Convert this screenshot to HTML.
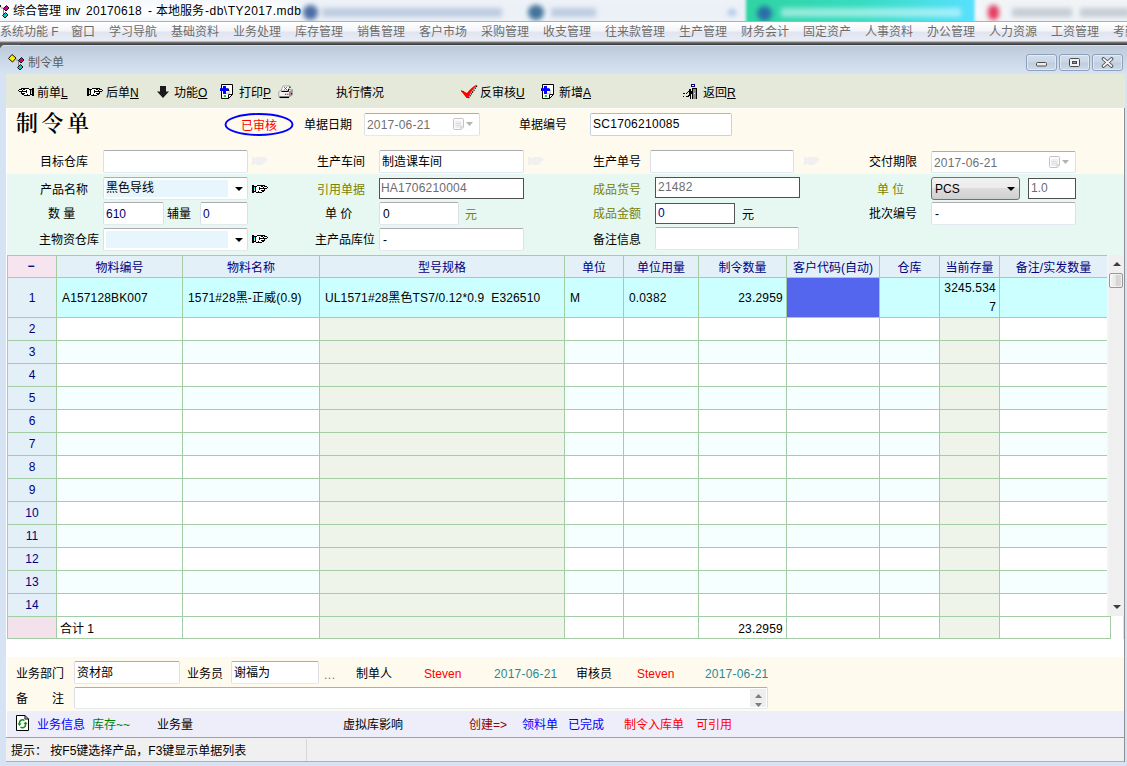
<!DOCTYPE html><html lang="zh-CN"><head><meta charset="utf-8"><title>制令单</title><style>
html,body{margin:0;padding:0;}
body{width:1127px;height:766px;overflow:hidden;position:relative;background:#fff;
 font-family:"Liberation Sans","Noto Sans CJK SC",sans-serif;font-size:12px;color:#000;}
.a{position:absolute;white-space:nowrap;}
.t{position:absolute;white-space:nowrap;line-height:14px;height:14px;}
.in{position:absolute;box-sizing:border-box;background:#fff;border:1px solid #dbdfe6;border-top-color:#abadb3;border-bottom-color:#e3e9ef;border-radius:2px;white-space:nowrap;overflow:hidden;line-height:14px;padding:4px 0 0 2px;}
.in.dk{border:1px solid #505050;border-radius:0;color:#6d6d6d;background:#fff;}
.ol{color:#808000;}
u{text-decoration:underline;}
.c{position:absolute;box-sizing:border-box;border-right:1px solid #a5cda5;border-bottom:1px solid #a5cda5;white-space:nowrap;overflow:hidden;}
.h{color:#000080;text-align:center;line-height:20px;}
</style></head><body>
<div class="a" id="titlebar" style="left:0;top:0;width:1127px;height:21px;background:linear-gradient(#f4f8fc,#ffffff 60%,#f2f5f9);overflow:hidden;">
<div class="a" style="left:296px;top:-4px;width:460px;height:30px;background:#ecf1f7;filter:blur(4px);opacity:1;border-radius:0px;"></div>
<div class="a" style="left:303px;top:5px;width:15px;height:15px;background:#3b5f9c;filter:blur(2.5px);opacity:0.9;border-radius:8px;"></div>
<div class="a" style="left:322px;top:8px;width:180px;height:9px;background:#9fb4d2;filter:blur(2.5px);opacity:0.6;border-radius:0px;"></div>
<div class="a" style="left:528px;top:5px;width:16px;height:15px;background:#2f6590;filter:blur(2.5px);opacity:0.9;border-radius:8px;"></div>
<div class="a" style="left:551px;top:8px;width:45px;height:9px;background:#9fb4d2;filter:blur(2.5px);opacity:0.6;border-radius:0px;"></div>
<div class="a" style="left:728px;top:9px;width:8px;height:7px;background:#a8c4e8;filter:blur(2px);opacity:0.8;border-radius:0px;"></div>
<div class="a" style="left:746px;top:-6px;width:229px;height:32px;background:linear-gradient(90deg,#2fd3a2,#36dcc0 50%,#58e0ff);filter:blur(1.500px);"></div>
<div class="a" style="left:757px;top:6px;width:15px;height:15px;background:#2a62a8;filter:blur(2.5px);opacity:0.9;border-radius:8px;"></div>
<div class="a" style="left:781px;top:8px;width:180px;height:9px;background:#e8fbff;filter:blur(2.5px);opacity:0.55;border-radius:0px;"></div>
<div class="a" style="left:978px;top:-4px;width:160px;height:30px;background:#f1f4f7;filter:blur(3px);opacity:1;border-radius:0px;"></div>
<div class="a" style="left:988px;top:5px;width:11px;height:15px;background:#e23358;filter:blur(2.5px);opacity:0.95;border-radius:6px;"></div>
<div class="a" style="left:1012px;top:8px;width:60px;height:9px;background:#9aa6b4;filter:blur(2.5px);opacity:0.5;border-radius:0px;"></div>
<div class="a" style="left:1080px;top:8px;width:50px;height:9px;background:#9aa6b4;filter:blur(2.5px);opacity:0.5;border-radius:0px;"></div>
</div>
<svg class="a" style="left:-7px;top:2px;" width="17" height="17" viewBox="0 0 17 17"><path d="M8 6h2.500v6.500h2" fill="none" stroke="#888" stroke-width="1"/><path d="M4 0.500l4 3.500l-3.500 4l-4 -3.500z" fill="#ffee00" stroke="#111" stroke-width="1"/><path d="M13.500 3.500l2.500 2.500l-3 3l-2.500 -2.500z" fill="#d4007f" stroke="#111" stroke-width="1"/><path d="M12.500 10.500l2.500 2.500l-3 3l-2.500 -2.500z" fill="#00c8c8" stroke="#111" stroke-width="1"/></svg>
<div class="a" id="apptitle" style="left:0;top:3px;width:320px;height:16px;font-size:12px;line-height:16px;"><span class="a" style="left:13px;">综合管理</span><span class="a" style="left:66px;letter-spacing:-0.5px;">inv</span><span class="a" style="left:86px;letter-spacing:0.33px;">20170618</span><span class="a" style="left:148px;">-</span><span class="a" style="left:156px;">本地服务</span><span class="a" style="left:205px;letter-spacing:0.5px;">-db\TY2017.mdb</span></div>
<div class="a" id="menubar" style="left:0;top:21px;width:1127px;height:20px;background:linear-gradient(#ffffff,#f4f5f9 45%,#e1e5f0 55%,#e9ecf5);border-top:1px solid #aab0bc;box-sizing:border-box;color:#6d6d6d;overflow:hidden;">
<span class="t" style="left:0px;top:3px;">系统功能 F</span>
<span class="t" style="left:71px;top:3px;">窗口</span>
<span class="t" style="left:109px;top:3px;">学习导航</span>
<span class="t" style="left:171px;top:3px;">基础资料</span>
<span class="t" style="left:233px;top:3px;">业务处理</span>
<span class="t" style="left:295px;top:3px;">库存管理</span>
<span class="t" style="left:357px;top:3px;">销售管理</span>
<span class="t" style="left:419px;top:3px;">客户市场</span>
<span class="t" style="left:481px;top:3px;">采购管理</span>
<span class="t" style="left:543px;top:3px;">收支管理</span>
<span class="t" style="left:605px;top:3px;">往来款管理</span>
<span class="t" style="left:679px;top:3px;">生产管理</span>
<span class="t" style="left:741px;top:3px;">财务会计</span>
<span class="t" style="left:803px;top:3px;">固定资产</span>
<span class="t" style="left:865px;top:3px;">人事资料</span>
<span class="t" style="left:927px;top:3px;">办公管理</span>
<span class="t" style="left:989px;top:3px;">人力资源</span>
<span class="t" style="left:1051px;top:3px;">工资管理</span>
<span class="t" style="left:1113px;top:3px;">考勤</span>
</div>
<div class="a" style="left:0;top:41px;width:1127px;height:4px;background:linear-gradient(#d8d8d8,#6e6e6e 40%,#303030);"></div>
<div class="a" style="left:0;top:44px;width:20px;height:8px;background:#555;"></div>
<div class="a" id="child" style="left:0;top:45px;width:1127px;height:721px;background:#d6e3f4;border-radius:5px 0 0 0;"></div>
<div class="a" style="left:0;top:45px;width:1127px;height:29px;background:linear-gradient(#e4ecf4 0,#bccadb 1.500px,#cad7e6 50%,#d6e3f3);border-radius:5px 0 0 0;"></div>
<div class="t" style="left:28px;top:56px;color:#5e5e5e;">制令单</div>
<svg class="a" style="left:8px;top:54px;" width="17" height="17" viewBox="0 0 17 17"><path d="M8 6h2.500v6.500h2" fill="none" stroke="#888" stroke-width="1"/><path d="M4 0.500l4 3.500l-3.500 4l-4 -3.500z" fill="#ffee00" stroke="#111" stroke-width="1"/><path d="M13.500 3.500l2.500 2.500l-3 3l-2.500 -2.500z" fill="#d4007f" stroke="#111" stroke-width="1"/><path d="M12.500 10.500l2.500 2.500l-3 3l-2.500 -2.500z" fill="#00c8c8" stroke="#111" stroke-width="1"/></svg>
<div class="a" style="left:1026px;top:54px;width:31px;height:17px;box-sizing:border-box;border:1px solid #8fa0ba;border-radius:3px;background:linear-gradient(#d3deec,#c9d6e6 48%,#bfcde0 52%,#cbd9ea);box-shadow:inset 0 0 0 1px rgba(255,255,255,.45);"></div>
<div class="a" style="left:1059px;top:54px;width:31px;height:17px;box-sizing:border-box;border:1px solid #8fa0ba;border-radius:3px;background:linear-gradient(#d3deec,#c9d6e6 48%,#bfcde0 52%,#cbd9ea);box-shadow:inset 0 0 0 1px rgba(255,255,255,.45);"></div>
<div class="a" style="left:1092px;top:54px;width:31px;height:17px;box-sizing:border-box;border:1px solid #8fa0ba;border-radius:3px;background:linear-gradient(#d3deec,#c9d6e6 48%,#bfcde0 52%,#cbd9ea);box-shadow:inset 0 0 0 1px rgba(255,255,255,.45);"></div>
<svg class="a" style="left:1035px;top:57px" width="80" height="11" viewBox="0 0 80 11"><rect x="1.500" y="5.500" width="10" height="3.500" rx="1" fill="#ececec" stroke="#4a4a4a"/><rect x="34.500" y="1.500" width="10" height="8" rx="1" fill="#f2f2f2" stroke="#4a4a4a"/><rect x="37.500" y="4.500" width="4" height="2" fill="#8aa0c0" stroke="#4a4a4a"/><path d="M68.500 2l8 7M76.500 2l-8 7" stroke="#4a4a4a" stroke-width="3.600" stroke-linecap="round"/><path d="M68.500 2l8 7M76.500 2l-8 7" stroke="#f4f4f4" stroke-width="1.800" stroke-linecap="round"/></svg>
<div class="a" id="toolbar" style="left:6px;top:74px;width:1119px;height:34px;background:#e5e9d9;"></div>
<div class="t" style="left:37px;top:86px;">前单<u>L</u></div>
<div class="t" style="left:106px;top:86px;">后单<u>N</u></div>
<div class="t" style="left:174px;top:86px;">功能<u>O</u></div>
<div class="t" style="left:239px;top:86px;">打印<u>P</u></div>
<div class="t" style="left:336px;top:86px;">执行情况</div>
<div class="t" style="left:480px;top:86px;">反审核<u>U</u></div>
<div class="t" style="left:559px;top:86px;">新增<u>A</u></div>
<div class="t" style="left:703px;top:86px;">返回<u>R</u></div>
<svg class="a" style="left:87px;top:88px;" width="16" height="8" viewBox="0 0 16 8" shape-rendering="crispEdges"><rect x="0" y="0" width="2" height="1" fill="#000"/><rect x="5" y="0" width="8" height="1" fill="#000"/><rect x="0" y="1" width="5" height="1" fill="#000"/><rect x="5" y="1" width="4" height="1" fill="#fff"/><rect x="9" y="1" width="2" height="1" fill="#000"/><rect x="11" y="1" width="1" height="1" fill="#fff"/><rect x="12" y="1" width="3" height="1" fill="#000"/><rect x="0" y="2" width="2" height="1" fill="#000"/><rect x="2" y="2" width="1" height="1" fill="#00ffff"/><rect x="3" y="2" width="1" height="1" fill="#000"/><rect x="4" y="2" width="3" height="1" fill="#fff"/><rect x="7" y="2" width="1" height="1" fill="#000"/><rect x="8" y="2" width="3" height="1" fill="#fff"/><rect x="11" y="2" width="1" height="1" fill="#000"/><rect x="12" y="2" width="3" height="1" fill="#fff"/><rect x="15" y="2" width="1" height="1" fill="#000"/><rect x="0" y="3" width="2" height="1" fill="#000"/><rect x="2" y="3" width="1" height="1" fill="#00ffff"/><rect x="3" y="3" width="1" height="1" fill="#000"/><rect x="4" y="3" width="3" height="1" fill="#fff"/><rect x="7" y="3" width="8" height="1" fill="#000"/><rect x="0" y="4" width="2" height="1" fill="#000"/><rect x="2" y="4" width="1" height="1" fill="#f4dada"/><rect x="3" y="4" width="1" height="1" fill="#000"/><rect x="4" y="4" width="3" height="1" fill="#fff"/><rect x="7" y="4" width="1" height="1" fill="#000"/><rect x="8" y="4" width="4" height="1" fill="#fff"/><rect x="12" y="4" width="1" height="1" fill="#000"/><rect x="0" y="5" width="2" height="1" fill="#000"/><rect x="2" y="5" width="1" height="1" fill="#f4dada"/><rect x="3" y="5" width="1" height="1" fill="#000"/><rect x="4" y="5" width="5" height="1" fill="#fff"/><rect x="9" y="5" width="4" height="1" fill="#000"/><rect x="0" y="6" width="4" height="1" fill="#000"/><rect x="4" y="6" width="2" height="1" fill="#fff"/><rect x="6" y="6" width="1" height="1" fill="#000"/><rect x="7" y="6" width="3" height="1" fill="#fff"/><rect x="10" y="6" width="2" height="1" fill="#000"/><rect x="0" y="7" width="2" height="1" fill="#000"/><rect x="4" y="7" width="6" height="1" fill="#000"/></svg>
<svg class="a" style="left:18px;top:88px;" width="16" height="8" viewBox="0 0 16 8" shape-rendering="crispEdges"><rect x="3" y="0" width="8" height="1" fill="#000"/><rect x="14" y="0" width="2" height="1" fill="#000"/><rect x="1" y="1" width="3" height="1" fill="#000"/><rect x="4" y="1" width="1" height="1" fill="#fff"/><rect x="5" y="1" width="2" height="1" fill="#000"/><rect x="7" y="1" width="4" height="1" fill="#fff"/><rect x="11" y="1" width="5" height="1" fill="#000"/><rect x="0" y="2" width="1" height="1" fill="#000"/><rect x="1" y="2" width="3" height="1" fill="#fff"/><rect x="4" y="2" width="1" height="1" fill="#000"/><rect x="5" y="2" width="3" height="1" fill="#fff"/><rect x="8" y="2" width="1" height="1" fill="#000"/><rect x="9" y="2" width="3" height="1" fill="#fff"/><rect x="12" y="2" width="1" height="1" fill="#000"/><rect x="13" y="2" width="1" height="1" fill="#00ffff"/><rect x="14" y="2" width="2" height="1" fill="#000"/><rect x="1" y="3" width="8" height="1" fill="#000"/><rect x="9" y="3" width="3" height="1" fill="#fff"/><rect x="12" y="3" width="1" height="1" fill="#000"/><rect x="13" y="3" width="1" height="1" fill="#00ffff"/><rect x="14" y="3" width="2" height="1" fill="#000"/><rect x="3" y="4" width="1" height="1" fill="#000"/><rect x="4" y="4" width="4" height="1" fill="#fff"/><rect x="8" y="4" width="1" height="1" fill="#000"/><rect x="9" y="4" width="3" height="1" fill="#fff"/><rect x="12" y="4" width="1" height="1" fill="#000"/><rect x="13" y="4" width="1" height="1" fill="#f4dada"/><rect x="14" y="4" width="2" height="1" fill="#000"/><rect x="3" y="5" width="4" height="1" fill="#000"/><rect x="7" y="5" width="5" height="1" fill="#fff"/><rect x="12" y="5" width="1" height="1" fill="#000"/><rect x="13" y="5" width="1" height="1" fill="#f4dada"/><rect x="14" y="5" width="2" height="1" fill="#000"/><rect x="4" y="6" width="2" height="1" fill="#000"/><rect x="6" y="6" width="3" height="1" fill="#fff"/><rect x="9" y="6" width="1" height="1" fill="#000"/><rect x="10" y="6" width="2" height="1" fill="#fff"/><rect x="12" y="6" width="4" height="1" fill="#000"/><rect x="6" y="7" width="6" height="1" fill="#000"/><rect x="14" y="7" width="2" height="1" fill="#000"/></svg>
<svg class="a" style="left:157px;top:86px" width="12" height="12" viewBox="0 0 12 12"><path d="M3 0h6v5.500h3l-6 6.500l-6 -6.500h3z" fill="#1a1a1a"/></svg>
<svg class="a" style="left:219px;top:84px" width="15" height="16" viewBox="0 0 15 16"><path d="M2.500 0.500H13.500V10.500L9.500 14.500H2.500Z" fill="#fff" stroke="#000"/><path d="M13.500 10.500H9.500V14.500" fill="none" stroke="#000"/><path d="M9 6.500 h1.500 v1.500 q0 1.500 -1.500 1.500 h-2" fill="none" stroke="#c6c6c6" stroke-width="1.400"/><rect x="4" y="2" width="3" height="7.300" fill="#0000ff"/><rect x="1" y="4.200" width="8.200" height="2.800" fill="#0000ff"/><rect x="4" y="9" width="3" height="0.800" fill="#000"/><rect x="9" y="4.600" width="0.900" height="2.400" fill="#000"/><rect x="4.800" y="11" width="2.200" height="2" fill="#00e000"/></svg>
<svg class="a" style="left:540px;top:84px" width="15" height="16" viewBox="0 0 15 16"><path d="M2.500 0.500H13.500V10.500L9.500 14.500H2.500Z" fill="#fff" stroke="#000"/><path d="M13.500 10.500H9.500V14.500" fill="none" stroke="#000"/><path d="M9 6.500 h1.500 v1.500 q0 1.500 -1.500 1.500 h-2" fill="none" stroke="#c6c6c6" stroke-width="1.400"/><rect x="4" y="2" width="3" height="7.300" fill="#0000ff"/><rect x="1" y="4.200" width="8.200" height="2.800" fill="#0000ff"/><rect x="4" y="9" width="3" height="0.800" fill="#000"/><rect x="9" y="4.600" width="0.900" height="2.400" fill="#000"/><rect x="4.800" y="11" width="2.200" height="2" fill="#00e000"/></svg>
<svg class="a" style="left:278px;top:85px" width="16" height="14" viewBox="0 0 16 14"><path d="M0.500 7 L3.500 4.500 H14.500 L11 7 Z" fill="#fdfdfd" stroke="#999" stroke-width="0.600"/><path d="M11 7 L14.800 4.300 V10 L11 12.600 Z" fill="#959595"/><rect x="0.500" y="7" width="10.500" height="5.500" fill="#f2f2f2"/><path d="M0.800 7 V12" stroke="#9a9a9a" stroke-width="0.900"/><path d="M5 1 H12 L10 6 H3 Z" fill="#fff" stroke="#8a8a8a" stroke-width="0.700"/><path d="M6 2 L9.500 5.500 M9 2 L5.500 5.500" stroke="#ff0000" stroke-width="1" stroke-dasharray="1 0.600"/><path d="M3.500 6.500 H10 L11 4" stroke="#000" stroke-width="1.200" fill="none"/><circle cx="12" cy="2.300" r="0.700" fill="#000"/><path d="M1.500 12.300 H11" stroke="#000" stroke-width="1.500"/><rect x="7" y="8.700" width="1.200" height="1.200" fill="#ff0000"/><rect x="9.200" y="8.700" width="1.200" height="1.200" fill="#ff0000"/><circle cx="13.500" cy="8.700" r="0.600" fill="#000"/></svg>
<svg class="a" style="left:460px;top:83px" width="18" height="16" viewBox="0 0 18 16"><path d="M8.400 15.200 L16.900 2.800" stroke="#000" stroke-width="1.300" stroke-dasharray="1.300 1" fill="none"/><path d="M1 8 L2.500 7.800 L7 10 C9.500 6.500 13 3.500 16.500 1.800 L17 2.300 C13 6 10.500 10 8 15 L6.500 15 Z" fill="#ff0000"/><path d="M1 8 l1 -0.200 l2 1.200" stroke="#000" stroke-width="0.800" stroke-dasharray="1 1" fill="none"/></svg>
<svg class="a" style="left:683px;top:84px" width="15" height="15" viewBox="0 0 15 15" shape-rendering="crispEdges"><rect x="8" y="0" width="4" height="3" fill="#000080"/><rect x="9" y="1" width="2" height="1" fill="#fff"/><rect x="9" y="4" width="5" height="11" fill="#000"/><rect x="10" y="5" width="3" height="10" fill="#8a8a8a"/><rect x="11" y="9" width="1" height="1" fill="#fff"/><path d="M6 5h2v2h-2z M5 7h4v1h-4z M6 8h2v3h-2z M4 8h1v1h-1z M8 8h1v2h-1z M5 11h2v1h-2z M3 12h3v1h-3z M7 11h1v4h-1z" fill="#000"/><rect x="0" y="9" width="2" height="1" fill="#000"/><rect x="3" y="9" width="1" height="1" fill="#000"/><rect x="0" y="12" width="1" height="1" fill="#000"/></svg>
<div class="a" style="left:6px;top:108px;width:1118px;height:66px;background:#fffaee;border-top:1px solid #fff;border-right:1px solid #fff;box-sizing:border-box;"></div>
<div class="a" style="left:6px;top:174px;width:1118px;height:82px;background:#e6f8f1;"></div>
<div class="a" style="left:16px;top:109px;font-family:'Liberation Serif','Noto Serif CJK SC',serif;font-weight:600;font-size:22px;line-height:30px;letter-spacing:3.5px;">制令单</div>
<svg class="a" style="left:223px;top:111px" width="72" height="27" viewBox="0 0 72 27"><ellipse cx="36" cy="13.500" rx="33.500" ry="10.500" fill="none" stroke="#0000ff" stroke-width="1.900"/></svg>
<div class="t" style="left:241px;top:119px;color:#ff0000;">已审核</div>
<div class="t " style="left:304px;top:118px;">单据日期</div>
<div class="in " style="left:364px;top:113px;width:116px;height:23px;letter-spacing:0.2px;color:#707070;padding-top:4px;padding-left:2px;">2017-06-21</div>
<div class="t " style="left:519px;top:118px;">单据编号</div>
<div class="in " style="left:590px;top:113px;width:142px;height:23px;letter-spacing:0.28px;padding-top:3px;padding-left:2px;border-color:#c3d3e6;border-top-color:#a9b9d0;">SC1706210085</div>
<svg class="a" style="left:453px;top:118px" width="22" height="13" viewBox="0 0 22 13"><path d="M1.500 0.500h8q1 0 1 1v7.500l-2.500 2.500h-6.500q-1 0 -1 -1v-9q0 -1 1 -1z" fill="#fbfbfd" stroke="#c9c2c2"/><path d="M10.500 9h-2.500v2.500" fill="none" stroke="#d0caca"/><rect x="2.500" y="3.500" width="6" height="6" fill="#dddde6"/><path d="M3.500 4.500h1M5.500 4.500h1M7.500 4.500h1M3.500 6.500h1M5.500 6.500h1M7.500 6.500h1M3.500 8.500h1M5.500 8.500h1" stroke="#fff" stroke-width="1"/><path d="M13 4h7l-3.500 4z" fill="#b4b4ac"/></svg>
<div class="t " style="left:40px;top:155px;">目标仓库</div>
<div class="in " style="left:103px;top:150px;width:145px;height:23px;"></div>
<div class="t " style="left:317px;top:155px;">生产车间</div>
<div class="in " style="left:379px;top:150px;width:145px;height:23px;">制造课车间</div>
<div class="t " style="left:593px;top:155px;">生产单号</div>
<div class="in " style="left:650px;top:150px;width:144px;height:23px;"></div>
<div class="t " style="left:869px;top:155px;">交付期限</div>
<div class="in " style="left:931px;top:151px;width:145px;height:22px;letter-spacing:0.2px;color:#707070;padding-top:4px;padding-left:2px;">2017-06-21</div>
<svg class="a" style="left:1049px;top:156px" width="22" height="13" viewBox="0 0 22 13"><path d="M1.500 0.500h8q1 0 1 1v7.500l-2.500 2.500h-6.500q-1 0 -1 -1v-9q0 -1 1 -1z" fill="#fbfbfd" stroke="#c9c2c2"/><path d="M10.500 9h-2.500v2.500" fill="none" stroke="#d0caca"/><rect x="2.500" y="3.500" width="6" height="6" fill="#dddde6"/><path d="M3.500 4.500h1M5.500 4.500h1M7.500 4.500h1M3.500 6.500h1M5.500 6.500h1M7.500 6.500h1M3.500 8.500h1M5.500 8.500h1" stroke="#fff" stroke-width="1"/><path d="M13 4h7l-3.500 4z" fill="#b4b4ac"/></svg>
<svg class="a" style="left:252px;top:157px;" width="16" height="8" viewBox="0 0 16 8" shape-rendering="crispEdges"><rect x="0" y="0" width="2" height="1" fill="#f0f0f0"/><rect x="5" y="0" width="8" height="1" fill="#f0f0f0"/><rect x="0" y="1" width="5" height="1" fill="#f0f0f0"/><rect x="5" y="1" width="4" height="1" fill="#f0f0f0"/><rect x="9" y="1" width="2" height="1" fill="#f0f0f0"/><rect x="11" y="1" width="1" height="1" fill="#f0f0f0"/><rect x="12" y="1" width="3" height="1" fill="#f0f0f0"/><rect x="0" y="2" width="2" height="1" fill="#f0f0f0"/><rect x="2" y="2" width="1" height="1" fill="#f0f0f0"/><rect x="3" y="2" width="1" height="1" fill="#f0f0f0"/><rect x="4" y="2" width="3" height="1" fill="#f0f0f0"/><rect x="7" y="2" width="1" height="1" fill="#f0f0f0"/><rect x="8" y="2" width="3" height="1" fill="#f0f0f0"/><rect x="11" y="2" width="1" height="1" fill="#f0f0f0"/><rect x="12" y="2" width="3" height="1" fill="#f0f0f0"/><rect x="15" y="2" width="1" height="1" fill="#f0f0f0"/><rect x="0" y="3" width="2" height="1" fill="#f0f0f0"/><rect x="2" y="3" width="1" height="1" fill="#f0f0f0"/><rect x="3" y="3" width="1" height="1" fill="#f0f0f0"/><rect x="4" y="3" width="3" height="1" fill="#f0f0f0"/><rect x="7" y="3" width="8" height="1" fill="#f0f0f0"/><rect x="0" y="4" width="2" height="1" fill="#f0f0f0"/><rect x="2" y="4" width="1" height="1" fill="#f0f0f0"/><rect x="3" y="4" width="1" height="1" fill="#f0f0f0"/><rect x="4" y="4" width="3" height="1" fill="#f0f0f0"/><rect x="7" y="4" width="1" height="1" fill="#f0f0f0"/><rect x="8" y="4" width="4" height="1" fill="#f0f0f0"/><rect x="12" y="4" width="1" height="1" fill="#f0f0f0"/><rect x="0" y="5" width="2" height="1" fill="#f0f0f0"/><rect x="2" y="5" width="1" height="1" fill="#f0f0f0"/><rect x="3" y="5" width="1" height="1" fill="#f0f0f0"/><rect x="4" y="5" width="5" height="1" fill="#f0f0f0"/><rect x="9" y="5" width="4" height="1" fill="#f0f0f0"/><rect x="0" y="6" width="4" height="1" fill="#f0f0f0"/><rect x="4" y="6" width="2" height="1" fill="#f0f0f0"/><rect x="6" y="6" width="1" height="1" fill="#f0f0f0"/><rect x="7" y="6" width="3" height="1" fill="#f0f0f0"/><rect x="10" y="6" width="2" height="1" fill="#f0f0f0"/><rect x="0" y="7" width="2" height="1" fill="#f0f0f0"/><rect x="4" y="7" width="6" height="1" fill="#f0f0f0"/></svg>
<svg class="a" style="left:528px;top:157px;" width="16" height="8" viewBox="0 0 16 8" shape-rendering="crispEdges"><rect x="0" y="0" width="2" height="1" fill="#f0f0f0"/><rect x="5" y="0" width="8" height="1" fill="#f0f0f0"/><rect x="0" y="1" width="5" height="1" fill="#f0f0f0"/><rect x="5" y="1" width="4" height="1" fill="#f0f0f0"/><rect x="9" y="1" width="2" height="1" fill="#f0f0f0"/><rect x="11" y="1" width="1" height="1" fill="#f0f0f0"/><rect x="12" y="1" width="3" height="1" fill="#f0f0f0"/><rect x="0" y="2" width="2" height="1" fill="#f0f0f0"/><rect x="2" y="2" width="1" height="1" fill="#f0f0f0"/><rect x="3" y="2" width="1" height="1" fill="#f0f0f0"/><rect x="4" y="2" width="3" height="1" fill="#f0f0f0"/><rect x="7" y="2" width="1" height="1" fill="#f0f0f0"/><rect x="8" y="2" width="3" height="1" fill="#f0f0f0"/><rect x="11" y="2" width="1" height="1" fill="#f0f0f0"/><rect x="12" y="2" width="3" height="1" fill="#f0f0f0"/><rect x="15" y="2" width="1" height="1" fill="#f0f0f0"/><rect x="0" y="3" width="2" height="1" fill="#f0f0f0"/><rect x="2" y="3" width="1" height="1" fill="#f0f0f0"/><rect x="3" y="3" width="1" height="1" fill="#f0f0f0"/><rect x="4" y="3" width="3" height="1" fill="#f0f0f0"/><rect x="7" y="3" width="8" height="1" fill="#f0f0f0"/><rect x="0" y="4" width="2" height="1" fill="#f0f0f0"/><rect x="2" y="4" width="1" height="1" fill="#f0f0f0"/><rect x="3" y="4" width="1" height="1" fill="#f0f0f0"/><rect x="4" y="4" width="3" height="1" fill="#f0f0f0"/><rect x="7" y="4" width="1" height="1" fill="#f0f0f0"/><rect x="8" y="4" width="4" height="1" fill="#f0f0f0"/><rect x="12" y="4" width="1" height="1" fill="#f0f0f0"/><rect x="0" y="5" width="2" height="1" fill="#f0f0f0"/><rect x="2" y="5" width="1" height="1" fill="#f0f0f0"/><rect x="3" y="5" width="1" height="1" fill="#f0f0f0"/><rect x="4" y="5" width="5" height="1" fill="#f0f0f0"/><rect x="9" y="5" width="4" height="1" fill="#f0f0f0"/><rect x="0" y="6" width="4" height="1" fill="#f0f0f0"/><rect x="4" y="6" width="2" height="1" fill="#f0f0f0"/><rect x="6" y="6" width="1" height="1" fill="#f0f0f0"/><rect x="7" y="6" width="3" height="1" fill="#f0f0f0"/><rect x="10" y="6" width="2" height="1" fill="#f0f0f0"/><rect x="0" y="7" width="2" height="1" fill="#f0f0f0"/><rect x="4" y="7" width="6" height="1" fill="#f0f0f0"/></svg>
<svg class="a" style="left:804px;top:157px;" width="16" height="8" viewBox="0 0 16 8" shape-rendering="crispEdges"><rect x="0" y="0" width="2" height="1" fill="#f0f0f0"/><rect x="5" y="0" width="8" height="1" fill="#f0f0f0"/><rect x="0" y="1" width="5" height="1" fill="#f0f0f0"/><rect x="5" y="1" width="4" height="1" fill="#f0f0f0"/><rect x="9" y="1" width="2" height="1" fill="#f0f0f0"/><rect x="11" y="1" width="1" height="1" fill="#f0f0f0"/><rect x="12" y="1" width="3" height="1" fill="#f0f0f0"/><rect x="0" y="2" width="2" height="1" fill="#f0f0f0"/><rect x="2" y="2" width="1" height="1" fill="#f0f0f0"/><rect x="3" y="2" width="1" height="1" fill="#f0f0f0"/><rect x="4" y="2" width="3" height="1" fill="#f0f0f0"/><rect x="7" y="2" width="1" height="1" fill="#f0f0f0"/><rect x="8" y="2" width="3" height="1" fill="#f0f0f0"/><rect x="11" y="2" width="1" height="1" fill="#f0f0f0"/><rect x="12" y="2" width="3" height="1" fill="#f0f0f0"/><rect x="15" y="2" width="1" height="1" fill="#f0f0f0"/><rect x="0" y="3" width="2" height="1" fill="#f0f0f0"/><rect x="2" y="3" width="1" height="1" fill="#f0f0f0"/><rect x="3" y="3" width="1" height="1" fill="#f0f0f0"/><rect x="4" y="3" width="3" height="1" fill="#f0f0f0"/><rect x="7" y="3" width="8" height="1" fill="#f0f0f0"/><rect x="0" y="4" width="2" height="1" fill="#f0f0f0"/><rect x="2" y="4" width="1" height="1" fill="#f0f0f0"/><rect x="3" y="4" width="1" height="1" fill="#f0f0f0"/><rect x="4" y="4" width="3" height="1" fill="#f0f0f0"/><rect x="7" y="4" width="1" height="1" fill="#f0f0f0"/><rect x="8" y="4" width="4" height="1" fill="#f0f0f0"/><rect x="12" y="4" width="1" height="1" fill="#f0f0f0"/><rect x="0" y="5" width="2" height="1" fill="#f0f0f0"/><rect x="2" y="5" width="1" height="1" fill="#f0f0f0"/><rect x="3" y="5" width="1" height="1" fill="#f0f0f0"/><rect x="4" y="5" width="5" height="1" fill="#f0f0f0"/><rect x="9" y="5" width="4" height="1" fill="#f0f0f0"/><rect x="0" y="6" width="4" height="1" fill="#f0f0f0"/><rect x="4" y="6" width="2" height="1" fill="#f0f0f0"/><rect x="6" y="6" width="1" height="1" fill="#f0f0f0"/><rect x="7" y="6" width="3" height="1" fill="#f0f0f0"/><rect x="10" y="6" width="2" height="1" fill="#f0f0f0"/><rect x="0" y="7" width="2" height="1" fill="#f0f0f0"/><rect x="4" y="7" width="6" height="1" fill="#f0f0f0"/></svg>
<div class="t " style="left:40px;top:183px;">产品名称</div>
<div class="in " style="left:103px;top:177px;width:145px;height:23px;padding:0;"></div>
<div class="a" style="left:106px;top:180px;width:122px;height:17px;background:#e6f6fc;"></div>
<div class="t" style="left:106px;top:181px;">黑色导线</div>
<div class="a" style="left:235px;top:187px;width:0;height:0;border-left:4px solid transparent;border-right:4px solid transparent;border-top:4px solid #000;"></div>
<div class="t ol" style="left:317px;top:183px;">引用单据</div>
<div class="in dk" style="left:379px;top:178px;width:145px;height:21px;letter-spacing:0.2px;padding-top:2px;padding-left:1px;">HA1706210004</div>
<div class="t ol" style="left:593px;top:183px;">成品货号</div>
<div class="in dk" style="left:655px;top:177px;width:145px;height:21px;letter-spacing:0.25px;padding-top:2px;padding-left:2px;">21482</div>
<div class="t ol" style="left:877px;top:183px;">单 位</div>
<div class="a" style="left:931px;top:177px;width:89px;height:23px;box-sizing:border-box;border:1px solid #707070;border-radius:3px;background:linear-gradient(#f2f2f2,#ebebeb 50%,#dddddd 50%,#cfcfcf);line-height:14px;padding:4px 0 0 3px;">PCS</div>
<div class="in dk" style="left:1028px;top:178px;width:48px;height:21px;padding-top:2px;padding-left:2px;">1.0</div>
<div class="a" style="left:1007px;top:187px;width:0;height:0;border-left:4px solid transparent;border-right:4px solid transparent;border-top:4px solid #000;"></div>
<svg class="a" style="left:252px;top:185px;" width="16" height="8" viewBox="0 0 16 8" shape-rendering="crispEdges"><rect x="0" y="0" width="2" height="1" fill="#000"/><rect x="5" y="0" width="8" height="1" fill="#000"/><rect x="0" y="1" width="5" height="1" fill="#000"/><rect x="5" y="1" width="4" height="1" fill="#fff"/><rect x="9" y="1" width="2" height="1" fill="#000"/><rect x="11" y="1" width="1" height="1" fill="#fff"/><rect x="12" y="1" width="3" height="1" fill="#000"/><rect x="0" y="2" width="2" height="1" fill="#000"/><rect x="2" y="2" width="1" height="1" fill="#00ffff"/><rect x="3" y="2" width="1" height="1" fill="#000"/><rect x="4" y="2" width="3" height="1" fill="#fff"/><rect x="7" y="2" width="1" height="1" fill="#000"/><rect x="8" y="2" width="3" height="1" fill="#fff"/><rect x="11" y="2" width="1" height="1" fill="#000"/><rect x="12" y="2" width="3" height="1" fill="#fff"/><rect x="15" y="2" width="1" height="1" fill="#000"/><rect x="0" y="3" width="2" height="1" fill="#000"/><rect x="2" y="3" width="1" height="1" fill="#00ffff"/><rect x="3" y="3" width="1" height="1" fill="#000"/><rect x="4" y="3" width="3" height="1" fill="#fff"/><rect x="7" y="3" width="8" height="1" fill="#000"/><rect x="0" y="4" width="2" height="1" fill="#000"/><rect x="2" y="4" width="1" height="1" fill="#f4dada"/><rect x="3" y="4" width="1" height="1" fill="#000"/><rect x="4" y="4" width="3" height="1" fill="#fff"/><rect x="7" y="4" width="1" height="1" fill="#000"/><rect x="8" y="4" width="4" height="1" fill="#fff"/><rect x="12" y="4" width="1" height="1" fill="#000"/><rect x="0" y="5" width="2" height="1" fill="#000"/><rect x="2" y="5" width="1" height="1" fill="#f4dada"/><rect x="3" y="5" width="1" height="1" fill="#000"/><rect x="4" y="5" width="5" height="1" fill="#fff"/><rect x="9" y="5" width="4" height="1" fill="#000"/><rect x="0" y="6" width="4" height="1" fill="#000"/><rect x="4" y="6" width="2" height="1" fill="#fff"/><rect x="6" y="6" width="1" height="1" fill="#000"/><rect x="7" y="6" width="3" height="1" fill="#fff"/><rect x="10" y="6" width="2" height="1" fill="#000"/><rect x="0" y="7" width="2" height="1" fill="#000"/><rect x="4" y="7" width="6" height="1" fill="#000"/></svg>
<svg class="a" style="left:252px;top:235px;" width="16" height="8" viewBox="0 0 16 8" shape-rendering="crispEdges"><rect x="0" y="0" width="2" height="1" fill="#000"/><rect x="5" y="0" width="8" height="1" fill="#000"/><rect x="0" y="1" width="5" height="1" fill="#000"/><rect x="5" y="1" width="4" height="1" fill="#fff"/><rect x="9" y="1" width="2" height="1" fill="#000"/><rect x="11" y="1" width="1" height="1" fill="#fff"/><rect x="12" y="1" width="3" height="1" fill="#000"/><rect x="0" y="2" width="2" height="1" fill="#000"/><rect x="2" y="2" width="1" height="1" fill="#00ffff"/><rect x="3" y="2" width="1" height="1" fill="#000"/><rect x="4" y="2" width="3" height="1" fill="#fff"/><rect x="7" y="2" width="1" height="1" fill="#000"/><rect x="8" y="2" width="3" height="1" fill="#fff"/><rect x="11" y="2" width="1" height="1" fill="#000"/><rect x="12" y="2" width="3" height="1" fill="#fff"/><rect x="15" y="2" width="1" height="1" fill="#000"/><rect x="0" y="3" width="2" height="1" fill="#000"/><rect x="2" y="3" width="1" height="1" fill="#00ffff"/><rect x="3" y="3" width="1" height="1" fill="#000"/><rect x="4" y="3" width="3" height="1" fill="#fff"/><rect x="7" y="3" width="8" height="1" fill="#000"/><rect x="0" y="4" width="2" height="1" fill="#000"/><rect x="2" y="4" width="1" height="1" fill="#f4dada"/><rect x="3" y="4" width="1" height="1" fill="#000"/><rect x="4" y="4" width="3" height="1" fill="#fff"/><rect x="7" y="4" width="1" height="1" fill="#000"/><rect x="8" y="4" width="4" height="1" fill="#fff"/><rect x="12" y="4" width="1" height="1" fill="#000"/><rect x="0" y="5" width="2" height="1" fill="#000"/><rect x="2" y="5" width="1" height="1" fill="#f4dada"/><rect x="3" y="5" width="1" height="1" fill="#000"/><rect x="4" y="5" width="5" height="1" fill="#fff"/><rect x="9" y="5" width="4" height="1" fill="#000"/><rect x="0" y="6" width="4" height="1" fill="#000"/><rect x="4" y="6" width="2" height="1" fill="#fff"/><rect x="6" y="6" width="1" height="1" fill="#000"/><rect x="7" y="6" width="3" height="1" fill="#fff"/><rect x="10" y="6" width="2" height="1" fill="#000"/><rect x="0" y="7" width="2" height="1" fill="#000"/><rect x="4" y="7" width="6" height="1" fill="#000"/></svg>
<div class="t " style="left:48px;top:207px;">数 量</div>
<div class="in " style="left:103px;top:202px;width:61px;height:23px;color:#00006a">610</div>
<div class="t " style="left:167px;top:207px;">辅量</div>
<div class="in " style="left:200px;top:202px;width:48px;height:23px;color:#00006a">0</div>
<div class="t " style="left:325px;top:207px;">单 价</div>
<div class="in " style="left:379px;top:202px;width:80px;height:23px;padding-left:3px">0</div>
<div class="t ol" style="left:465px;top:208px;">元</div>
<div class="t ol" style="left:593px;top:207px;">成品金额</div>
<div class="in " style="left:655px;top:203px;width:80px;height:21px;border:1px solid #555;border-radius:0;color:#000080;padding-top:2px;padding-left:2px;">0</div>
<div class="t " style="left:742px;top:208px;">元</div>
<div class="t " style="left:869px;top:207px;">批次编号</div>
<div class="in " style="left:931px;top:202px;width:145px;height:23px;padding-left:3px">-</div>
<div class="t " style="left:39px;top:233px;">主物资仓库</div>
<div class="in " style="left:103px;top:228px;width:145px;height:23px;padding:0;"></div>
<div class="a" style="left:106px;top:231px;width:122px;height:17px;background:#e6f6fc;"></div>
<div class="a" style="left:235px;top:238px;width:0;height:0;border-left:4px solid transparent;border-right:4px solid transparent;border-top:4px solid #000;"></div>
<div class="t " style="left:315px;top:233px;">主产品库位</div>
<div class="in " style="left:379px;top:228px;width:145px;height:23px;padding-left:3px">-</div>
<div class="t " style="left:593px;top:233px;">备注信息</div>
<div class="in " style="left:655px;top:227px;width:144px;height:23px;"></div>
<div class="a" id="grid" style="left:7px;top:255px;width:1116px;height:384px;background:#fff;"></div>
<div class="a" style="left:7px;top:255px;width:1101px;height:362px;background:#a5cda5;"></div>
<div class="a" style="left:7px;top:616px;width:1104px;height:23px;background:#a5cda5;"></div>
<div class="a" style="left:8px;top:256px;width:48px;height:21px;background:#f6e4ee;overflow:hidden;box-sizing:border-box;color:#000080;text-align:center;font-weight:bold;line-height:20px;padding-right:2px;">−</div>
<div class="a" style="left:57px;top:256px;width:125px;height:21px;background:#e3f0f7;overflow:hidden;box-sizing:border-box;color:#000080;text-align:center;line-height:24px;">物料编号</div>
<div class="a" style="left:183px;top:256px;width:136px;height:21px;background:#e3f0f7;overflow:hidden;box-sizing:border-box;color:#000080;text-align:center;line-height:24px;">物料名称</div>
<div class="a" style="left:320px;top:256px;width:244px;height:21px;background:#e3f0f7;overflow:hidden;box-sizing:border-box;color:#000080;text-align:center;line-height:24px;">型号规格</div>
<div class="a" style="left:565px;top:256px;width:58px;height:21px;background:#e3f0f7;overflow:hidden;box-sizing:border-box;color:#000080;text-align:center;line-height:24px;">单位</div>
<div class="a" style="left:624px;top:256px;width:74px;height:21px;background:#e3f0f7;overflow:hidden;box-sizing:border-box;color:#000080;text-align:center;line-height:24px;">单位用量</div>
<div class="a" style="left:699px;top:256px;width:87px;height:21px;background:#e3f0f7;overflow:hidden;box-sizing:border-box;color:#000080;text-align:center;line-height:24px;">制令数量</div>
<div class="a" style="left:787px;top:256px;width:92px;height:21px;background:#e3f0f7;overflow:hidden;box-sizing:border-box;color:#000080;text-align:center;line-height:24px;">客户代码(自动)</div>
<div class="a" style="left:880px;top:256px;width:59px;height:21px;background:#e3f0f7;overflow:hidden;box-sizing:border-box;color:#000080;text-align:center;line-height:24px;">仓库</div>
<div class="a" style="left:940px;top:256px;width:59px;height:21px;background:#e3f0f7;overflow:hidden;box-sizing:border-box;color:#000080;text-align:center;line-height:24px;">当前存量</div>
<div class="a" style="left:1000px;top:256px;width:107px;height:21px;background:#e3f0f7;overflow:hidden;box-sizing:border-box;color:#000080;text-align:center;line-height:24px;">备注/实发数量</div>
<div class="a" style="left:8px;top:278px;width:48px;height:39px;background:#e3f0f7;overflow:hidden;box-sizing:border-box;color:#000080;text-align:center;line-height:41px;">1</div>
<div class="a" style="left:57px;top:278px;width:125px;height:39px;background:#ccffff;overflow:hidden;box-sizing:border-box;line-height:41px;padding-left:5px;letter-spacing:0.14px;">A157128BK007</div>
<div class="a" style="left:183px;top:278px;width:136px;height:39px;background:#ccffff;overflow:hidden;box-sizing:border-box;line-height:41px;padding-left:5px;letter-spacing:0.14px;">1571#28黑-正威(0.9)</div>
<div class="a" style="left:320px;top:278px;width:244px;height:39px;background:#ccffff;overflow:hidden;box-sizing:border-box;line-height:41px;padding-left:5px;letter-spacing:0.14px;">UL1571#28黑色TS7/0.12*0.9&nbsp; E326510</div>
<div class="a" style="left:565px;top:278px;width:58px;height:39px;background:#ccffff;overflow:hidden;box-sizing:border-box;line-height:41px;padding-left:5px;letter-spacing:0.14px;">M</div>
<div class="a" style="left:624px;top:278px;width:74px;height:39px;background:#ccffff;overflow:hidden;box-sizing:border-box;line-height:41px;padding-left:5px;letter-spacing:0.14px;">0.0382</div>
<div class="a" style="left:699px;top:278px;width:87px;height:39px;background:#ccffff;overflow:hidden;box-sizing:border-box;line-height:41px;text-align:right;padding-right:3px;letter-spacing:0.2px;">23.2959</div>
<div class="a" style="left:787px;top:278px;width:92px;height:39px;background:#5566ee;overflow:hidden;box-sizing:border-box;line-height:41px;padding-left:5px;letter-spacing:0.14px;"></div>
<div class="a" style="left:880px;top:278px;width:59px;height:39px;background:#ccffff;overflow:hidden;box-sizing:border-box;line-height:41px;padding-left:5px;letter-spacing:0.14px;"></div>
<div class="a" style="left:940px;top:278px;width:59px;height:39px;background:#ccffff;overflow:hidden;box-sizing:border-box;line-height:19px;padding-top:1px;text-align:right;padding-right:3px;white-space:normal;letter-spacing:0.2px;">3245.534<br>7</div>
<div class="a" style="left:1000px;top:278px;width:107px;height:39px;background:#ccffff;overflow:hidden;box-sizing:border-box;line-height:41px;padding-left:5px;letter-spacing:0.14px;"></div>
<div class="a" style="left:8px;top:318px;width:48px;height:22px;background:#e3f0f7;overflow:hidden;box-sizing:border-box;color:#000080;text-align:center;line-height:22px;">2</div>
<div class="a" style="left:57px;top:318px;width:125px;height:22px;background:#ffffff;overflow:hidden;box-sizing:border-box;"></div>
<div class="a" style="left:183px;top:318px;width:136px;height:22px;background:#ffffff;overflow:hidden;box-sizing:border-box;"></div>
<div class="a" style="left:320px;top:318px;width:244px;height:22px;background:#eef4ea;overflow:hidden;box-sizing:border-box;"></div>
<div class="a" style="left:565px;top:318px;width:58px;height:22px;background:#ffffff;overflow:hidden;box-sizing:border-box;"></div>
<div class="a" style="left:624px;top:318px;width:74px;height:22px;background:#ffffff;overflow:hidden;box-sizing:border-box;"></div>
<div class="a" style="left:699px;top:318px;width:87px;height:22px;background:#ffffff;overflow:hidden;box-sizing:border-box;"></div>
<div class="a" style="left:787px;top:318px;width:92px;height:22px;background:#ffffff;overflow:hidden;box-sizing:border-box;"></div>
<div class="a" style="left:880px;top:318px;width:59px;height:22px;background:#ffffff;overflow:hidden;box-sizing:border-box;"></div>
<div class="a" style="left:940px;top:318px;width:59px;height:22px;background:#eef4ea;overflow:hidden;box-sizing:border-box;"></div>
<div class="a" style="left:1000px;top:318px;width:107px;height:22px;background:#ffffff;overflow:hidden;box-sizing:border-box;"></div>
<div class="a" style="left:8px;top:341px;width:48px;height:22px;background:#e3f0f7;overflow:hidden;box-sizing:border-box;color:#000080;text-align:center;line-height:22px;">3</div>
<div class="a" style="left:57px;top:341px;width:125px;height:22px;background:#f5ffff;overflow:hidden;box-sizing:border-box;"></div>
<div class="a" style="left:183px;top:341px;width:136px;height:22px;background:#f5ffff;overflow:hidden;box-sizing:border-box;"></div>
<div class="a" style="left:320px;top:341px;width:244px;height:22px;background:#eef4ea;overflow:hidden;box-sizing:border-box;"></div>
<div class="a" style="left:565px;top:341px;width:58px;height:22px;background:#f5ffff;overflow:hidden;box-sizing:border-box;"></div>
<div class="a" style="left:624px;top:341px;width:74px;height:22px;background:#f5ffff;overflow:hidden;box-sizing:border-box;"></div>
<div class="a" style="left:699px;top:341px;width:87px;height:22px;background:#f5ffff;overflow:hidden;box-sizing:border-box;"></div>
<div class="a" style="left:787px;top:341px;width:92px;height:22px;background:#f5ffff;overflow:hidden;box-sizing:border-box;"></div>
<div class="a" style="left:880px;top:341px;width:59px;height:22px;background:#f5ffff;overflow:hidden;box-sizing:border-box;"></div>
<div class="a" style="left:940px;top:341px;width:59px;height:22px;background:#eef4ea;overflow:hidden;box-sizing:border-box;"></div>
<div class="a" style="left:1000px;top:341px;width:107px;height:22px;background:#f5ffff;overflow:hidden;box-sizing:border-box;"></div>
<div class="a" style="left:8px;top:364px;width:48px;height:22px;background:#e3f0f7;overflow:hidden;box-sizing:border-box;color:#000080;text-align:center;line-height:22px;">4</div>
<div class="a" style="left:57px;top:364px;width:125px;height:22px;background:#ffffff;overflow:hidden;box-sizing:border-box;"></div>
<div class="a" style="left:183px;top:364px;width:136px;height:22px;background:#ffffff;overflow:hidden;box-sizing:border-box;"></div>
<div class="a" style="left:320px;top:364px;width:244px;height:22px;background:#eef4ea;overflow:hidden;box-sizing:border-box;"></div>
<div class="a" style="left:565px;top:364px;width:58px;height:22px;background:#ffffff;overflow:hidden;box-sizing:border-box;"></div>
<div class="a" style="left:624px;top:364px;width:74px;height:22px;background:#ffffff;overflow:hidden;box-sizing:border-box;"></div>
<div class="a" style="left:699px;top:364px;width:87px;height:22px;background:#ffffff;overflow:hidden;box-sizing:border-box;"></div>
<div class="a" style="left:787px;top:364px;width:92px;height:22px;background:#ffffff;overflow:hidden;box-sizing:border-box;"></div>
<div class="a" style="left:880px;top:364px;width:59px;height:22px;background:#ffffff;overflow:hidden;box-sizing:border-box;"></div>
<div class="a" style="left:940px;top:364px;width:59px;height:22px;background:#eef4ea;overflow:hidden;box-sizing:border-box;"></div>
<div class="a" style="left:1000px;top:364px;width:107px;height:22px;background:#ffffff;overflow:hidden;box-sizing:border-box;"></div>
<div class="a" style="left:8px;top:387px;width:48px;height:22px;background:#e3f0f7;overflow:hidden;box-sizing:border-box;color:#000080;text-align:center;line-height:22px;">5</div>
<div class="a" style="left:57px;top:387px;width:125px;height:22px;background:#f5ffff;overflow:hidden;box-sizing:border-box;"></div>
<div class="a" style="left:183px;top:387px;width:136px;height:22px;background:#f5ffff;overflow:hidden;box-sizing:border-box;"></div>
<div class="a" style="left:320px;top:387px;width:244px;height:22px;background:#eef4ea;overflow:hidden;box-sizing:border-box;"></div>
<div class="a" style="left:565px;top:387px;width:58px;height:22px;background:#f5ffff;overflow:hidden;box-sizing:border-box;"></div>
<div class="a" style="left:624px;top:387px;width:74px;height:22px;background:#f5ffff;overflow:hidden;box-sizing:border-box;"></div>
<div class="a" style="left:699px;top:387px;width:87px;height:22px;background:#f5ffff;overflow:hidden;box-sizing:border-box;"></div>
<div class="a" style="left:787px;top:387px;width:92px;height:22px;background:#f5ffff;overflow:hidden;box-sizing:border-box;"></div>
<div class="a" style="left:880px;top:387px;width:59px;height:22px;background:#f5ffff;overflow:hidden;box-sizing:border-box;"></div>
<div class="a" style="left:940px;top:387px;width:59px;height:22px;background:#eef4ea;overflow:hidden;box-sizing:border-box;"></div>
<div class="a" style="left:1000px;top:387px;width:107px;height:22px;background:#f5ffff;overflow:hidden;box-sizing:border-box;"></div>
<div class="a" style="left:8px;top:410px;width:48px;height:22px;background:#e3f0f7;overflow:hidden;box-sizing:border-box;color:#000080;text-align:center;line-height:22px;">6</div>
<div class="a" style="left:57px;top:410px;width:125px;height:22px;background:#ffffff;overflow:hidden;box-sizing:border-box;"></div>
<div class="a" style="left:183px;top:410px;width:136px;height:22px;background:#ffffff;overflow:hidden;box-sizing:border-box;"></div>
<div class="a" style="left:320px;top:410px;width:244px;height:22px;background:#eef4ea;overflow:hidden;box-sizing:border-box;"></div>
<div class="a" style="left:565px;top:410px;width:58px;height:22px;background:#ffffff;overflow:hidden;box-sizing:border-box;"></div>
<div class="a" style="left:624px;top:410px;width:74px;height:22px;background:#ffffff;overflow:hidden;box-sizing:border-box;"></div>
<div class="a" style="left:699px;top:410px;width:87px;height:22px;background:#ffffff;overflow:hidden;box-sizing:border-box;"></div>
<div class="a" style="left:787px;top:410px;width:92px;height:22px;background:#ffffff;overflow:hidden;box-sizing:border-box;"></div>
<div class="a" style="left:880px;top:410px;width:59px;height:22px;background:#ffffff;overflow:hidden;box-sizing:border-box;"></div>
<div class="a" style="left:940px;top:410px;width:59px;height:22px;background:#eef4ea;overflow:hidden;box-sizing:border-box;"></div>
<div class="a" style="left:1000px;top:410px;width:107px;height:22px;background:#ffffff;overflow:hidden;box-sizing:border-box;"></div>
<div class="a" style="left:8px;top:433px;width:48px;height:22px;background:#e3f0f7;overflow:hidden;box-sizing:border-box;color:#000080;text-align:center;line-height:22px;">7</div>
<div class="a" style="left:57px;top:433px;width:125px;height:22px;background:#f5ffff;overflow:hidden;box-sizing:border-box;"></div>
<div class="a" style="left:183px;top:433px;width:136px;height:22px;background:#f5ffff;overflow:hidden;box-sizing:border-box;"></div>
<div class="a" style="left:320px;top:433px;width:244px;height:22px;background:#eef4ea;overflow:hidden;box-sizing:border-box;"></div>
<div class="a" style="left:565px;top:433px;width:58px;height:22px;background:#f5ffff;overflow:hidden;box-sizing:border-box;"></div>
<div class="a" style="left:624px;top:433px;width:74px;height:22px;background:#f5ffff;overflow:hidden;box-sizing:border-box;"></div>
<div class="a" style="left:699px;top:433px;width:87px;height:22px;background:#f5ffff;overflow:hidden;box-sizing:border-box;"></div>
<div class="a" style="left:787px;top:433px;width:92px;height:22px;background:#f5ffff;overflow:hidden;box-sizing:border-box;"></div>
<div class="a" style="left:880px;top:433px;width:59px;height:22px;background:#f5ffff;overflow:hidden;box-sizing:border-box;"></div>
<div class="a" style="left:940px;top:433px;width:59px;height:22px;background:#eef4ea;overflow:hidden;box-sizing:border-box;"></div>
<div class="a" style="left:1000px;top:433px;width:107px;height:22px;background:#f5ffff;overflow:hidden;box-sizing:border-box;"></div>
<div class="a" style="left:8px;top:456px;width:48px;height:22px;background:#e3f0f7;overflow:hidden;box-sizing:border-box;color:#000080;text-align:center;line-height:22px;">8</div>
<div class="a" style="left:57px;top:456px;width:125px;height:22px;background:#ffffff;overflow:hidden;box-sizing:border-box;"></div>
<div class="a" style="left:183px;top:456px;width:136px;height:22px;background:#ffffff;overflow:hidden;box-sizing:border-box;"></div>
<div class="a" style="left:320px;top:456px;width:244px;height:22px;background:#eef4ea;overflow:hidden;box-sizing:border-box;"></div>
<div class="a" style="left:565px;top:456px;width:58px;height:22px;background:#ffffff;overflow:hidden;box-sizing:border-box;"></div>
<div class="a" style="left:624px;top:456px;width:74px;height:22px;background:#ffffff;overflow:hidden;box-sizing:border-box;"></div>
<div class="a" style="left:699px;top:456px;width:87px;height:22px;background:#ffffff;overflow:hidden;box-sizing:border-box;"></div>
<div class="a" style="left:787px;top:456px;width:92px;height:22px;background:#ffffff;overflow:hidden;box-sizing:border-box;"></div>
<div class="a" style="left:880px;top:456px;width:59px;height:22px;background:#ffffff;overflow:hidden;box-sizing:border-box;"></div>
<div class="a" style="left:940px;top:456px;width:59px;height:22px;background:#eef4ea;overflow:hidden;box-sizing:border-box;"></div>
<div class="a" style="left:1000px;top:456px;width:107px;height:22px;background:#ffffff;overflow:hidden;box-sizing:border-box;"></div>
<div class="a" style="left:8px;top:479px;width:48px;height:22px;background:#e3f0f7;overflow:hidden;box-sizing:border-box;color:#000080;text-align:center;line-height:22px;">9</div>
<div class="a" style="left:57px;top:479px;width:125px;height:22px;background:#f5ffff;overflow:hidden;box-sizing:border-box;"></div>
<div class="a" style="left:183px;top:479px;width:136px;height:22px;background:#f5ffff;overflow:hidden;box-sizing:border-box;"></div>
<div class="a" style="left:320px;top:479px;width:244px;height:22px;background:#eef4ea;overflow:hidden;box-sizing:border-box;"></div>
<div class="a" style="left:565px;top:479px;width:58px;height:22px;background:#f5ffff;overflow:hidden;box-sizing:border-box;"></div>
<div class="a" style="left:624px;top:479px;width:74px;height:22px;background:#f5ffff;overflow:hidden;box-sizing:border-box;"></div>
<div class="a" style="left:699px;top:479px;width:87px;height:22px;background:#f5ffff;overflow:hidden;box-sizing:border-box;"></div>
<div class="a" style="left:787px;top:479px;width:92px;height:22px;background:#f5ffff;overflow:hidden;box-sizing:border-box;"></div>
<div class="a" style="left:880px;top:479px;width:59px;height:22px;background:#f5ffff;overflow:hidden;box-sizing:border-box;"></div>
<div class="a" style="left:940px;top:479px;width:59px;height:22px;background:#eef4ea;overflow:hidden;box-sizing:border-box;"></div>
<div class="a" style="left:1000px;top:479px;width:107px;height:22px;background:#f5ffff;overflow:hidden;box-sizing:border-box;"></div>
<div class="a" style="left:8px;top:502px;width:48px;height:22px;background:#e3f0f7;overflow:hidden;box-sizing:border-box;color:#000080;text-align:center;line-height:22px;">10</div>
<div class="a" style="left:57px;top:502px;width:125px;height:22px;background:#ffffff;overflow:hidden;box-sizing:border-box;"></div>
<div class="a" style="left:183px;top:502px;width:136px;height:22px;background:#ffffff;overflow:hidden;box-sizing:border-box;"></div>
<div class="a" style="left:320px;top:502px;width:244px;height:22px;background:#eef4ea;overflow:hidden;box-sizing:border-box;"></div>
<div class="a" style="left:565px;top:502px;width:58px;height:22px;background:#ffffff;overflow:hidden;box-sizing:border-box;"></div>
<div class="a" style="left:624px;top:502px;width:74px;height:22px;background:#ffffff;overflow:hidden;box-sizing:border-box;"></div>
<div class="a" style="left:699px;top:502px;width:87px;height:22px;background:#ffffff;overflow:hidden;box-sizing:border-box;"></div>
<div class="a" style="left:787px;top:502px;width:92px;height:22px;background:#ffffff;overflow:hidden;box-sizing:border-box;"></div>
<div class="a" style="left:880px;top:502px;width:59px;height:22px;background:#ffffff;overflow:hidden;box-sizing:border-box;"></div>
<div class="a" style="left:940px;top:502px;width:59px;height:22px;background:#eef4ea;overflow:hidden;box-sizing:border-box;"></div>
<div class="a" style="left:1000px;top:502px;width:107px;height:22px;background:#ffffff;overflow:hidden;box-sizing:border-box;"></div>
<div class="a" style="left:8px;top:525px;width:48px;height:22px;background:#e3f0f7;overflow:hidden;box-sizing:border-box;color:#000080;text-align:center;line-height:22px;">11</div>
<div class="a" style="left:57px;top:525px;width:125px;height:22px;background:#f5ffff;overflow:hidden;box-sizing:border-box;"></div>
<div class="a" style="left:183px;top:525px;width:136px;height:22px;background:#f5ffff;overflow:hidden;box-sizing:border-box;"></div>
<div class="a" style="left:320px;top:525px;width:244px;height:22px;background:#eef4ea;overflow:hidden;box-sizing:border-box;"></div>
<div class="a" style="left:565px;top:525px;width:58px;height:22px;background:#f5ffff;overflow:hidden;box-sizing:border-box;"></div>
<div class="a" style="left:624px;top:525px;width:74px;height:22px;background:#f5ffff;overflow:hidden;box-sizing:border-box;"></div>
<div class="a" style="left:699px;top:525px;width:87px;height:22px;background:#f5ffff;overflow:hidden;box-sizing:border-box;"></div>
<div class="a" style="left:787px;top:525px;width:92px;height:22px;background:#f5ffff;overflow:hidden;box-sizing:border-box;"></div>
<div class="a" style="left:880px;top:525px;width:59px;height:22px;background:#f5ffff;overflow:hidden;box-sizing:border-box;"></div>
<div class="a" style="left:940px;top:525px;width:59px;height:22px;background:#eef4ea;overflow:hidden;box-sizing:border-box;"></div>
<div class="a" style="left:1000px;top:525px;width:107px;height:22px;background:#f5ffff;overflow:hidden;box-sizing:border-box;"></div>
<div class="a" style="left:8px;top:548px;width:48px;height:22px;background:#e3f0f7;overflow:hidden;box-sizing:border-box;color:#000080;text-align:center;line-height:22px;">12</div>
<div class="a" style="left:57px;top:548px;width:125px;height:22px;background:#ffffff;overflow:hidden;box-sizing:border-box;"></div>
<div class="a" style="left:183px;top:548px;width:136px;height:22px;background:#ffffff;overflow:hidden;box-sizing:border-box;"></div>
<div class="a" style="left:320px;top:548px;width:244px;height:22px;background:#eef4ea;overflow:hidden;box-sizing:border-box;"></div>
<div class="a" style="left:565px;top:548px;width:58px;height:22px;background:#ffffff;overflow:hidden;box-sizing:border-box;"></div>
<div class="a" style="left:624px;top:548px;width:74px;height:22px;background:#ffffff;overflow:hidden;box-sizing:border-box;"></div>
<div class="a" style="left:699px;top:548px;width:87px;height:22px;background:#ffffff;overflow:hidden;box-sizing:border-box;"></div>
<div class="a" style="left:787px;top:548px;width:92px;height:22px;background:#ffffff;overflow:hidden;box-sizing:border-box;"></div>
<div class="a" style="left:880px;top:548px;width:59px;height:22px;background:#ffffff;overflow:hidden;box-sizing:border-box;"></div>
<div class="a" style="left:940px;top:548px;width:59px;height:22px;background:#eef4ea;overflow:hidden;box-sizing:border-box;"></div>
<div class="a" style="left:1000px;top:548px;width:107px;height:22px;background:#ffffff;overflow:hidden;box-sizing:border-box;"></div>
<div class="a" style="left:8px;top:571px;width:48px;height:22px;background:#e3f0f7;overflow:hidden;box-sizing:border-box;color:#000080;text-align:center;line-height:22px;">13</div>
<div class="a" style="left:57px;top:571px;width:125px;height:22px;background:#f5ffff;overflow:hidden;box-sizing:border-box;"></div>
<div class="a" style="left:183px;top:571px;width:136px;height:22px;background:#f5ffff;overflow:hidden;box-sizing:border-box;"></div>
<div class="a" style="left:320px;top:571px;width:244px;height:22px;background:#eef4ea;overflow:hidden;box-sizing:border-box;"></div>
<div class="a" style="left:565px;top:571px;width:58px;height:22px;background:#f5ffff;overflow:hidden;box-sizing:border-box;"></div>
<div class="a" style="left:624px;top:571px;width:74px;height:22px;background:#f5ffff;overflow:hidden;box-sizing:border-box;"></div>
<div class="a" style="left:699px;top:571px;width:87px;height:22px;background:#f5ffff;overflow:hidden;box-sizing:border-box;"></div>
<div class="a" style="left:787px;top:571px;width:92px;height:22px;background:#f5ffff;overflow:hidden;box-sizing:border-box;"></div>
<div class="a" style="left:880px;top:571px;width:59px;height:22px;background:#f5ffff;overflow:hidden;box-sizing:border-box;"></div>
<div class="a" style="left:940px;top:571px;width:59px;height:22px;background:#eef4ea;overflow:hidden;box-sizing:border-box;"></div>
<div class="a" style="left:1000px;top:571px;width:107px;height:22px;background:#f5ffff;overflow:hidden;box-sizing:border-box;"></div>
<div class="a" style="left:8px;top:594px;width:48px;height:22px;background:#e3f0f7;overflow:hidden;box-sizing:border-box;color:#000080;text-align:center;line-height:22px;">14</div>
<div class="a" style="left:57px;top:594px;width:125px;height:22px;background:#ffffff;overflow:hidden;box-sizing:border-box;"></div>
<div class="a" style="left:183px;top:594px;width:136px;height:22px;background:#ffffff;overflow:hidden;box-sizing:border-box;"></div>
<div class="a" style="left:320px;top:594px;width:244px;height:22px;background:#eef4ea;overflow:hidden;box-sizing:border-box;"></div>
<div class="a" style="left:565px;top:594px;width:58px;height:22px;background:#ffffff;overflow:hidden;box-sizing:border-box;"></div>
<div class="a" style="left:624px;top:594px;width:74px;height:22px;background:#ffffff;overflow:hidden;box-sizing:border-box;"></div>
<div class="a" style="left:699px;top:594px;width:87px;height:22px;background:#ffffff;overflow:hidden;box-sizing:border-box;"></div>
<div class="a" style="left:787px;top:594px;width:92px;height:22px;background:#ffffff;overflow:hidden;box-sizing:border-box;"></div>
<div class="a" style="left:880px;top:594px;width:59px;height:22px;background:#ffffff;overflow:hidden;box-sizing:border-box;"></div>
<div class="a" style="left:940px;top:594px;width:59px;height:22px;background:#eef4ea;overflow:hidden;box-sizing:border-box;"></div>
<div class="a" style="left:1000px;top:594px;width:107px;height:22px;background:#ffffff;overflow:hidden;box-sizing:border-box;"></div>
<div class="a" style="left:8px;top:617px;width:48px;height:21px;background:#f3e1ec;overflow:hidden;box-sizing:border-box;"></div>
<div class="a" style="left:57px;top:617px;width:125px;height:21px;background:#ffffff;overflow:hidden;box-sizing:border-box;line-height:25px;padding-left:3px;">合计 1</div>
<div class="a" style="left:183px;top:617px;width:136px;height:21px;background:#ffffff;overflow:hidden;box-sizing:border-box;"></div>
<div class="a" style="left:320px;top:617px;width:244px;height:21px;background:#eef4ea;overflow:hidden;box-sizing:border-box;"></div>
<div class="a" style="left:565px;top:617px;width:58px;height:21px;background:#ffffff;overflow:hidden;box-sizing:border-box;"></div>
<div class="a" style="left:624px;top:617px;width:74px;height:21px;background:#ffffff;overflow:hidden;box-sizing:border-box;"></div>
<div class="a" style="left:699px;top:617px;width:87px;height:21px;background:#ffffff;overflow:hidden;box-sizing:border-box;line-height:25px;text-align:right;padding-right:3px;letter-spacing:0.2px;">23.2959</div>
<div class="a" style="left:787px;top:617px;width:92px;height:21px;background:#ffffff;overflow:hidden;box-sizing:border-box;"></div>
<div class="a" style="left:880px;top:617px;width:59px;height:21px;background:#ffffff;overflow:hidden;box-sizing:border-box;"></div>
<div class="a" style="left:940px;top:617px;width:59px;height:21px;background:#eef4ea;overflow:hidden;box-sizing:border-box;"></div>
<div class="a" style="left:1000px;top:617px;width:110px;height:21px;background:#ffffff;overflow:hidden;box-sizing:border-box;"></div>
<div class="a" style="left:1107px;top:255px;width:17px;height:361px;background:linear-gradient(90deg,#f6f6f6,#efefef 3px,#f0f0f0);"></div>
<div class="a" style="left:1113px;top:262px;width:0;height:0;border-left:4px solid transparent;border-right:4px solid transparent;border-bottom:4px solid #3c3c3c;"></div>
<div class="a" style="left:1113px;top:605px;width:0;height:0;border-left:4px solid transparent;border-right:4px solid transparent;border-top:4px solid #3c3c3c;"></div>
<div class="a" style="left:1109px;top:273px;width:14px;height:15px;box-sizing:border-box;border:1px solid #979797;border-radius:2px;background:linear-gradient(90deg,#f4f4f4,#e6e6e6 48%,#d4d4d4 52%,#dadada);box-shadow:inset 0 0 0 1px rgba(255,255,255,.6);"></div>
<div class="a" style="left:6px;top:639px;width:1118px;height:19px;background:#ffffff;"></div>
<div class="a" style="left:6px;top:657px;width:1118px;height:54px;background:#fffaee;"></div>
<div class="t " style="left:16px;top:667px;">业务部门</div>
<div class="in " style="left:74px;top:661px;width:106px;height:23px;padding-top:4px">资材部</div>
<div class="t " style="left:187px;top:667px;">业务员</div>
<div class="in " style="left:231px;top:661px;width:88px;height:23px;padding-top:4px">谢福为</div>
<div class="t" style="left:324px;top:668px;color:#777;letter-spacing:0.5px;">...</div>
<div class="t " style="left:356px;top:667px;">制单人</div>
<div class="t" style="left:424px;top:667px;color:#ff0000;">Steven</div>
<div class="t" style="left:494px;top:667px;color:#1f8a96;letter-spacing:0.2px;">2017-06-21</div>
<div class="t " style="left:576px;top:667px;">审核员</div>
<div class="t" style="left:637px;top:667px;color:#ff0000;">Steven</div>
<div class="t" style="left:705px;top:667px;color:#1f8a96;letter-spacing:0.2px;">2017-06-21</div>
<div class="t " style="left:16px;top:692px;">备</div>
<div class="t " style="left:52px;top:692px;">注</div>
<div class="in " style="left:74px;top:687px;width:694px;height:22px;"></div>
<div class="a" style="left:750px;top:689px;width:16px;height:18px;background:#eeeeee;"></div>
<svg class="a" style="left:754px;top:693px" width="9" height="15" viewBox="0 0 9 15"><path d="M1 5h7l-3.500 -4z" fill="#7c7c7c"/><path d="M1 10h7l-3.500 4z" fill="#7c7c7c"/></svg>
<div class="a" style="left:6px;top:711px;width:1118px;height:26px;background:#eeeefa;"></div>
<svg class="a" style="left:16px;top:715px" width="14" height="16" viewBox="0 0 14 16"><path d="M0.500 0.500h8.500l3.500 3.500v11.500h-12z" fill="#fff" stroke="#000"/><path d="M9 0.500v3.500h3.500" fill="none" stroke="#000"/><path d="M8.500 5.500a3 3 0 0 0 -5 2v1.500" fill="none" stroke="#109010" stroke-width="1.600"/><path d="M1.500 8.500h4l-2 2.500z" fill="#109010"/><path d="M4.500 12a3 3 0 0 0 5 -2v-1.500" fill="none" stroke="#109010" stroke-width="1.600"/><path d="M11.500 9h-4l2 -2.500z" fill="#109010"/></svg>
<div class="t" style="left:37px;top:718px;color:#0000ff;">业务信息</div>
<div class="t" style="left:92px;top:718px;color:#008000;">库存~~</div>
<div class="t " style="left:157px;top:718px;">业务量</div>
<div class="t " style="left:343px;top:718px;">虚拟库影响</div>
<div class="t" style="left:469px;top:718px;color:#900000;">创建=&gt;</div>
<div class="t" style="left:522px;top:718px;color:#0000ff;">领料单</div>
<div class="t" style="left:568px;top:718px;color:#0000ff;">已完成</div>
<div class="t" style="left:624px;top:718px;color:#ff0000;">制令入库单</div>
<div class="t" style="left:696px;top:718px;color:#ff0000;">可引用</div>
<div class="a" style="left:6px;top:737px;width:1119px;height:25px;background:#f0f0f0;border-top:1px solid #a0a0a0;border-bottom:1px solid #b0b0b0;box-sizing:border-box;"></div>
<div class="a" style="left:306px;top:739px;width:1px;height:22px;background:#d8d8d8;"></div>
<div class="t" style="left:11px;top:744px;">提示： 按F5键选择产品，F3键显示单据列表</div>
<div class="a" style="left:0;top:762px;width:1127px;height:4px;background:#d6e3f4;"></div>
<div class="a" style="left:1124px;top:108px;width:1px;height:654px;background:#8e8e8e;"></div>
<div class="a" style="left:6px;top:108px;width:1px;height:629px;background:#ffffff;"></div>
</body></html>
